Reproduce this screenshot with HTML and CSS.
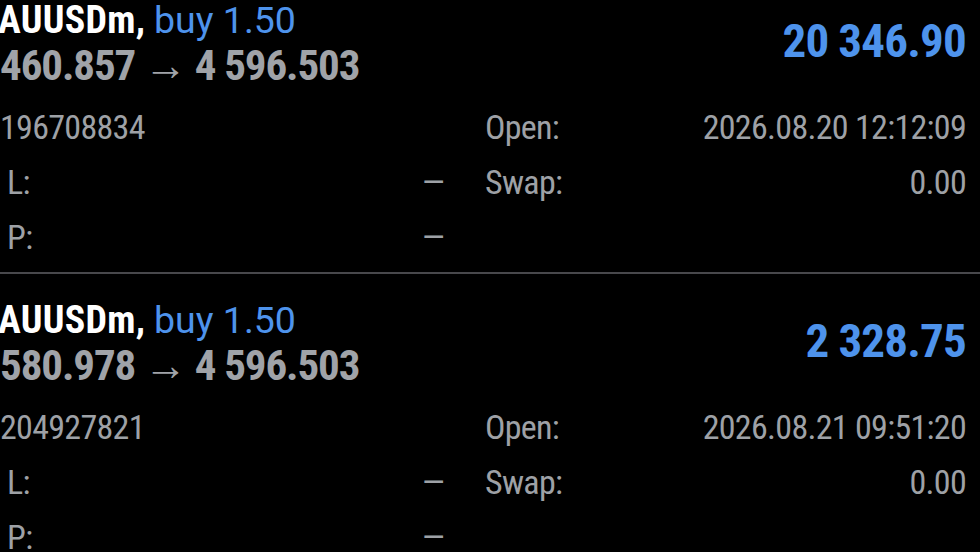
FILE: index.html
```html
<!DOCTYPE html>
<html>
<head>
<meta charset="utf-8">
<link rel="stylesheet" href="styles.css">
</head>
<body>
<div class="list">
  <div class="pos">
    <div class="head">
      <div class="head-left">
        <div class="title"><span class="sym">AUUSDm,</span> <span class="side">buy 1.50</span></div>
        <div class="prices">460.857 → 4 596.503</div>
      </div>
      <div class="profit">20 346.90</div>
    </div>
    <div class="details">
      <div class="cell"><span class="lbl ticket">196708834</span><span class="val"></span></div>
      <div class="cell"><span class="lbl">Open:</span><span class="val">2026.08.20 12:12:09</span></div>
      <div class="cell"><span class="lbl ind">L:</span><span class="val">—</span></div>
      <div class="cell"><span class="lbl">Swap:</span><span class="val">0.00</span></div>
      <div class="cell"><span class="lbl ind">P:</span><span class="val">—</span></div>
      <div class="cell"></div>
    </div>
  </div>
  <div class="pos">
    <div class="head">
      <div class="head-left">
        <div class="title"><span class="sym">AUUSDm,</span> <span class="side">buy 1.50</span></div>
        <div class="prices">580.978 → 4 596.503</div>
      </div>
      <div class="profit">2 328.75</div>
    </div>
    <div class="details">
      <div class="cell"><span class="lbl ticket">204927821</span><span class="val"></span></div>
      <div class="cell"><span class="lbl">Open:</span><span class="val">2026.08.21 09:51:20</span></div>
      <div class="cell"><span class="lbl ind">L:</span><span class="val">—</span></div>
      <div class="cell"><span class="lbl">Swap:</span><span class="val">0.00</span></div>
      <div class="cell"><span class="lbl ind">P:</span><span class="val">—</span></div>
      <div class="cell"></div>
    </div>
  </div>
</div>
</body>
</html>
```
FILE: styles.css
```css
html, body {
  margin: 0;
  padding: 0;
  background: #000;
  overflow: hidden;
  width: 980px;
  height: 552px;
}
.list {
  margin-top: -26px;
  font-family: "Roboto Condensed", Roboto, "Liberation Sans", sans-serif;
}
.pos {
  height: 300px;
  box-sizing: border-box;
  border-bottom: 2px solid #48484c;
  padding: 24px 14px 0 0;
}
.head {
  display: flex;
  justify-content: space-between;
  align-items: flex-start;
}
.title {
  font-size: 38px;
  line-height: 44px;
  margin-left: -2px;
  white-space: nowrap;
}
.sym {
  color: #fff;
  font-weight: 700;
  letter-spacing: 0.3px;
}
.side {
  font-family: Roboto, "Liberation Sans", sans-serif;
  font-size: 37.5px;
  color: #4e93ec;
}
.prices {
  font-size: 43px;
  line-height: 46px;
  font-weight: 700;
  letter-spacing: -1.1px;
  color: #a0a3a8;
  white-space: nowrap;
}
.profit {
  margin-top: 19px;
  font-size: 47px;
  line-height: 47px;
  font-weight: 700;
  letter-spacing: -0.8px;
  color: #4e93ec;
  white-space: nowrap;
}
.details {
  margin-top: 12px;
  display: grid;
  grid-template-columns: 444px 1fr;
  column-gap: 41px;
  font-size: 34px;
  line-height: 55px;
  letter-spacing: -0.7px;
  color: #9ea1a6;
}
.cell {
  display: flex;
  justify-content: space-between;
  white-space: nowrap;
}
.ticket {
  margin-left: 0;
}
.ind {
  padding-left: 7px;
}
```
